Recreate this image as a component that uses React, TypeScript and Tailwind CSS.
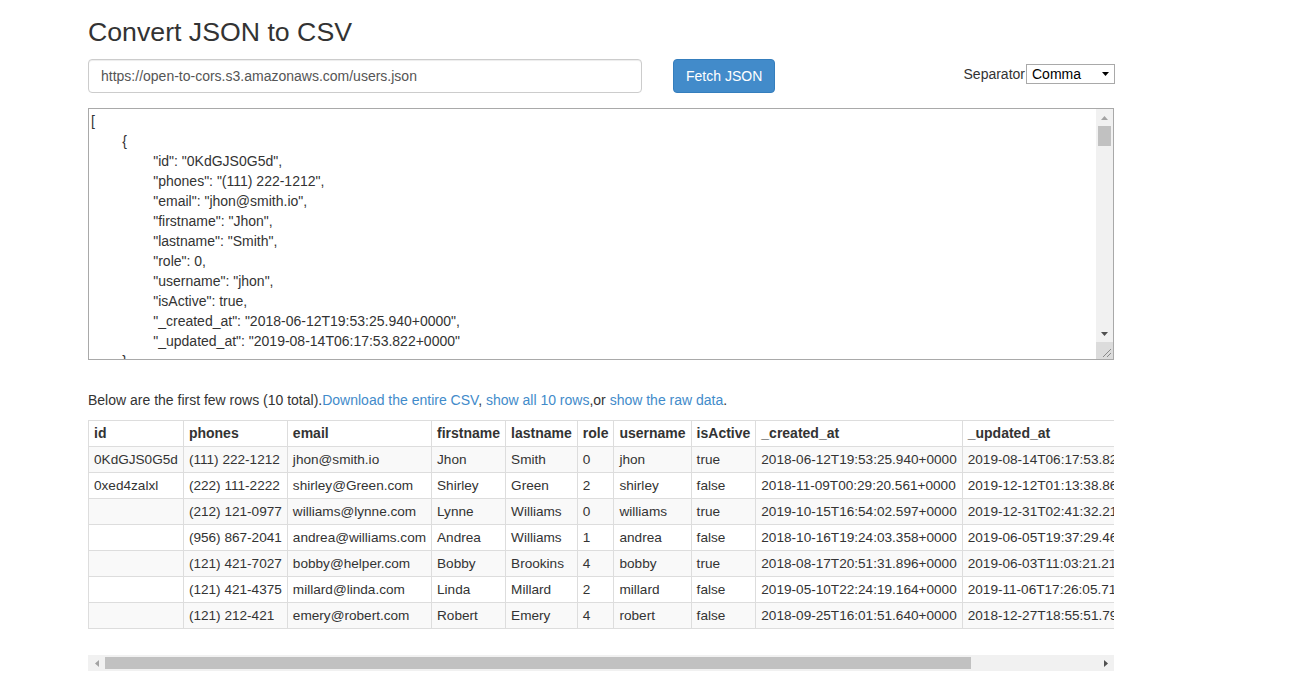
import React from "react";

const jsonText = `[
	{
		"id": "0KdGJS0G5d",
		"phones": "(111) 222-1212",
		"email": "jhon@smith.io",
		"firstname": "Jhon",
		"lastname": "Smith",
		"role": 0,
		"username": "jhon",
		"isActive": true,
		"_created_at": "2018-06-12T19:53:25.940+0000",
		"_updated_at": "2019-08-14T06:17:53.822+0000"
	},
	{
		"id": "0xed4zalxl",
		"phones": "(222) 111-2222",
		"email": "shirley@Green.com"
	}
]`;

const headers = [
  "id",
  "phones",
  "email",
  "firstname",
  "lastname",
  "role",
  "username",
  "isActive",
  "_created_at",
  "_updated_at",
];

const rows: string[][] = [
  ["0KdGJS0G5d", "(111) 222-1212", "jhon@smith.io", "Jhon", "Smith", "0", "jhon", "true", "2018-06-12T19:53:25.940+0000", "2019-08-14T06:17:53.822+0000"],
  ["0xed4zalxl", "(222) 111-2222", "shirley@Green.com", "Shirley", "Green", "2", "shirley", "false", "2018-11-09T00:29:20.561+0000", "2019-12-12T01:13:38.861+0000"],
  ["", "(212) 121-0977", "williams@lynne.com", "Lynne", "Williams", "0", "williams", "true", "2019-10-15T16:54:02.597+0000", "2019-12-31T02:41:32.213+0000"],
  ["", "(956) 867-2041", "andrea@williams.com", "Andrea", "Williams", "1", "andrea", "false", "2018-10-16T19:24:03.358+0000", "2019-06-05T19:37:29.461+0000"],
  ["", "(121) 421-7027", "bobby@helper.com", "Bobby", "Brookins", "4", "bobby", "true", "2018-08-17T20:51:31.896+0000", "2019-06-03T11:03:21.215+0000"],
  ["", "(121) 421-4375", "millard@linda.com", "Linda", "Millard", "2", "millard", "false", "2019-05-10T22:24:19.164+0000", "2019-11-06T17:26:05.712+0000"],
  ["", "(121) 212-421", "emery@robert.com", "Robert", "Emery", "4", "robert", "false", "2018-09-25T16:01:51.640+0000", "2018-12-27T18:55:51.794+0000"],
];

function Tri({ dir, color }: { dir: "up" | "down" | "left" | "right"; color: string }) {
  const pts =
    dir === "up"
      ? "0,4 3.5,0 7,4"
      : dir === "down"
      ? "0,0 7,0 3.5,4"
      : dir === "left"
      ? "4,0 4,7 0,3.5"
      : "0,0 0,7 4,3.5";
  const w = dir === "up" || dir === "down" ? 7 : 4;
  const h = dir === "up" || dir === "down" ? 4 : 7;
  return (
    <svg width={w} height={h} viewBox={`0 0 ${w} ${h}`}>
      <polygon points={pts} fill={color} />
    </svg>
  );
}

export default function App() {
  return (
    <div className="min-h-[692px] bg-white font-['Liberation_Sans',Arial,sans-serif] text-[14px] leading-[20px] text-[#333]">
      <div className="ml-[88px] w-[1026px] pt-[18px]">
        <h2 className="text-[26.7px] leading-[1.1] font-normal text-[#333]">Convert JSON to CSV</h2>

        <div className="mt-[12px] flex items-start">
          <div className="flex h-[34px] w-[554px] items-center rounded-[4px] border border-[#ccc] px-[12px] text-[#555] shadow-[inset_0_1px_1px_rgba(0,0,0,0.075)]">
            https://open-to-cors.s3.amazonaws.com/users.json
          </div>
          <button className="ml-[31px] h-[34px] rounded-[4px] border border-[#357ebd] bg-[#428bca] px-[12px] text-white">
            Fetch JSON
          </button>
          <div className="ml-auto mr-[-1px] mt-[5px] flex items-center">
            <span className="mr-[1px]">Separator</span>
            <div className="flex h-[20px] w-[89px] items-center justify-between border border-[#a9a9a9] bg-white pl-[5px] pr-[5px] text-[14px] leading-[18px] text-black">
              <span>Comma</span>
              <Tri dir="down" color="#000" />
            </div>
          </div>
        </div>

        <div className="mt-[15px] flex h-[252px] border border-[#a9a9a9] bg-white">
          <div className="flex-1 overflow-hidden whitespace-pre pl-[2px] pt-[2px] text-[#333] [tab-size:8]">
            {jsonText}
          </div>
          <div className="flex w-[17px] flex-col bg-[#f1f1f1]">
            <div className="flex h-[17px] items-center justify-center">
              <Tri dir="up" color="#a3a3a3" />
            </div>
            <div className="mx-[2px] h-[20px] bg-[#c1c1c1]" />
            <div className="flex-1" />
            <div className="flex h-[17px] items-center justify-center">
              <Tri dir="down" color="#505050" />
            </div>
            <div className="h-[17px] bg-[#dcdcdc]">
              <svg width="17" height="17" viewBox="0 0 17 17">
                <line x1="15" y1="7" x2="7" y2="15" stroke="#8a8a8a" strokeWidth="1" />
                <line x1="15" y1="11" x2="11" y2="15" stroke="#8a8a8a" strokeWidth="1" />
              </svg>
            </div>
          </div>
        </div>

        <p className="mt-[30px]">
          Below are the first few rows (10 total).
          <a className="text-[#428bca]">Download the entire CSV</a>,{" "}
          <a className="text-[#428bca]">show all 10 rows</a>,or{" "}
          <a className="text-[#428bca]">show the raw data</a>.
        </p>

        <div className="mt-[10px] w-[1026px] overflow-hidden">
          <table className="border-collapse whitespace-nowrap border border-[#ddd]">
            <thead>
              <tr>
                {headers.map((h) => (
                  <th key={h} className="border border-[#ddd] px-[5px] py-[2px] text-left text-[14px] font-bold leading-[21px]">
                    {h}
                  </th>
                ))}
              </tr>
            </thead>
            <tbody>
              {rows.map((r, i) => (
                <tr key={i} className={i % 2 === 0 ? "bg-[#f9f9f9]" : "bg-white"}>
                  {r.map((c, j) => (
                    <td key={j} className="border border-[#ddd] px-[5px] py-[2px] text-[13.6px] leading-[21px]">
                      {c}
                    </td>
                  ))}
                </tr>
              ))}
            </tbody>
          </table>
        </div>

        <div className="mt-[26px] flex h-[16px] bg-[#f1f1f1]">
          <div className="flex w-[17px] items-center justify-center">
            <Tri dir="left" color="#a3a3a3" />
          </div>
          <div className="my-[2px] w-[866px] bg-[#c1c1c1]" />
          <div className="flex-1" />
          <div className="flex w-[17px] items-center justify-center">
            <Tri dir="right" color="#505050" />
          </div>
        </div>
      </div>
    </div>
  );
}
